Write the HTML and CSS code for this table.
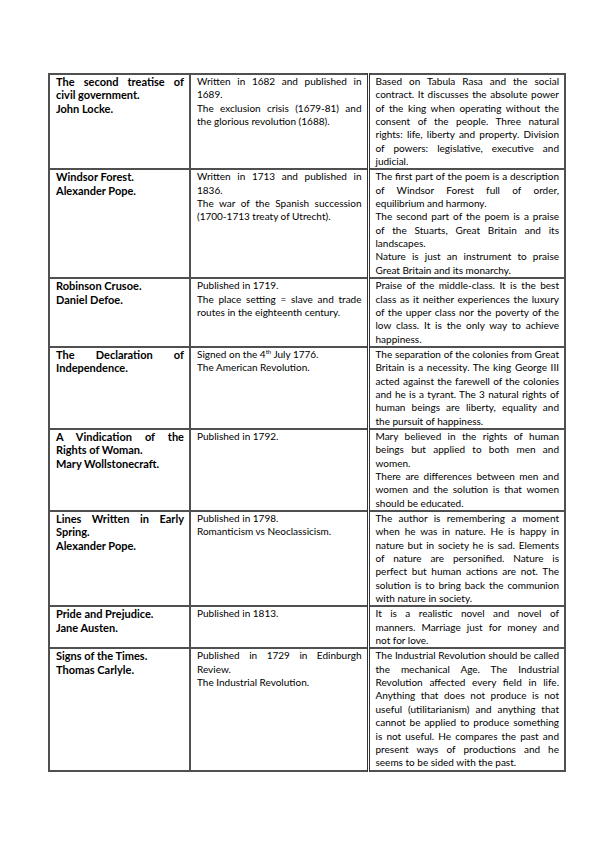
FILE: index.html
```html
<!DOCTYPE html>
<html>
<head>
<meta charset="utf-8">
<link rel="stylesheet" href="styles.css">
</head>
<body>
<div class="page">
<table class="works">
<colgroup><col class="c1"><col class="c2"><col class="c3"></colgroup>
<tr>
<td class="title"><span class="l">The second treatise of</span><span class="l e">civil government.</span><span class="l e">John Locke.</span></td>
<td class="info"><span class="l">Written in 1682 and published in</span><span class="l e">1689.</span><span class="l">The exclusion crisis (1679-81) and</span><span class="l e">the glorious revolution (1688).</span></td>
<td class="desc"><span class="l">Based on Tabula Rasa and the social</span><span class="l">contract. It discusses the absolute power</span><span class="l">of the king when operating without the</span><span class="l">consent of the people. Three natural</span><span class="l">rights: life, liberty and property. Division</span><span class="l">of powers: legislative, executive and</span><span class="l e">judicial.</span></td>
</tr>
<tr>
<td class="title"><span class="l e">Windsor Forest.</span><span class="l e">Alexander Pope.</span></td>
<td class="info"><span class="l">Written in 1713 and published in</span><span class="l e">1836.</span><span class="l">The war of the Spanish succession</span><span class="l e">(1700-1713 treaty of Utrecht).</span></td>
<td class="desc"><span class="l">The first part of the poem is a description</span><span class="l">of Windsor Forest full of order,</span><span class="l e">equilibrium and harmony.</span><span class="l">The second part of the poem is a praise</span><span class="l">of the Stuarts, Great Britain and its</span><span class="l e">landscapes.</span><span class="l">Nature is just an instrument to praise</span><span class="l e">Great Britain and its monarchy.</span></td>
</tr>
<tr>
<td class="title"><span class="l e">Robinson Crusoe.</span><span class="l e">Daniel Defoe.</span></td>
<td class="info"><span class="l e">Published in 1719.</span><span class="l">The place setting = slave and trade</span><span class="l e">routes in the eighteenth century.</span></td>
<td class="desc"><span class="l">Praise of the middle-class. It is the best</span><span class="l">class as it neither experiences the luxury</span><span class="l">of the upper class nor the poverty of the</span><span class="l">low class. It is the only way to achieve</span><span class="l e">happiness.</span></td>
</tr>
<tr>
<td class="title"><span class="l">The Declaration of</span><span class="l e">Independence.</span></td>
<td class="info"><span class="l e">Signed on the 4<sup>th</sup> July 1776.</span><span class="l e">The American Revolution.</span></td>
<td class="desc"><span class="l">The separation of the colonies from Great</span><span class="l">Britain is a necessity. The king George III</span><span class="l">acted against the farewell of the colonies</span><span class="l">and he is a tyrant. The 3 natural rights of</span><span class="l">human beings are liberty, equality and</span><span class="l e">the pursuit of happiness.</span></td>
</tr>
<tr>
<td class="title"><span class="l">A Vindication of the</span><span class="l e">Rights of Woman.</span><span class="l e">Mary Wollstonecraft.</span></td>
<td class="info"><span class="l e">Published in 1792.</span></td>
<td class="desc"><span class="l">Mary believed in the rights of human</span><span class="l">beings but applied to both men and</span><span class="l e">women.</span><span class="l">There are differences between men and</span><span class="l">women and the solution is that women</span><span class="l e">should be educated.</span></td>
</tr>
<tr>
<td class="title"><span class="l">Lines Written in Early</span><span class="l e">Spring.</span><span class="l e">Alexander Pope.</span></td>
<td class="info"><span class="l e">Published in 1798.</span><span class="l e">Romanticism vs Neoclassicism.</span></td>
<td class="desc"><span class="l">The author is remembering a moment</span><span class="l">when he was in nature. He is happy in</span><span class="l">nature but in society he is sad. Elements</span><span class="l">of nature are personified. Nature is</span><span class="l">perfect but human actions are not. The</span><span class="l">solution is to bring back the communion</span><span class="l e">with nature in society.</span></td>
</tr>
<tr>
<td class="title"><span class="l e">Pride and Prejudice.</span><span class="l e">Jane Austen.</span></td>
<td class="info"><span class="l e">Published in 1813.</span></td>
<td class="desc"><span class="l">It is a realistic novel and novel of</span><span class="l">manners. Marriage just for money and</span><span class="l e">not for love.</span></td>
</tr>
<tr>
<td class="title"><span class="l e">Signs of the Times.</span><span class="l e">Thomas Carlyle.</span></td>
<td class="info"><span class="l">Published in 1729 in Edinburgh</span><span class="l e">Review.</span><span class="l e">The Industrial Revolution.</span></td>
<td class="desc"><span class="l">The Industrial Revolution should be called</span><span class="l">the mechanical Age. The Industrial</span><span class="l">Revolution affected every field in life.</span><span class="l">Anything that does not produce is not</span><span class="l">useful (utilitarianism) and anything that</span><span class="l">cannot be applied to produce something</span><span class="l">is not useful. He compares the past and</span><span class="l">present ways of productions and he</span><span class="l e">seems to be sided with the past.</span></td>
</tr>
</table>
</div>
</body>
</html>
```
FILE: styles.css
```css
html, body {
  margin: 0;
  padding: 0;
  background: #ffffff;
}
.page {
  width: 599px;
  height: 848px;
  padding: 73px 0 0 48px;
  box-sizing: border-box;
}
.works {
  border-collapse: collapse;
  table-layout: fixed;
  width: 516px;
  font-family: Lato, "Liberation Sans", sans-serif;
  font-size: 10px;
  line-height: 13.35px;
  color: #000000;
}
.c1 { width: 141px; }
.c2 { width: 178px; }
.c3 { width: 197px; }
.works td {
  border: 2px solid #505050;
  vertical-align: top;
  padding: 0 5px 0 6px;
}
.works td.desc {
  border-left: 3px double #333333;
}
.title {
  font-weight: bold;
  font-size: 11px;
}
.l {
  display: block;
  text-align: justify;
  text-align-last: justify;
  white-space: nowrap;
}
.l.e {
  text-align-last: left;
}
sup {
  font-size: 6px;
  line-height: 0;
  vertical-align: 4px;
}
```
